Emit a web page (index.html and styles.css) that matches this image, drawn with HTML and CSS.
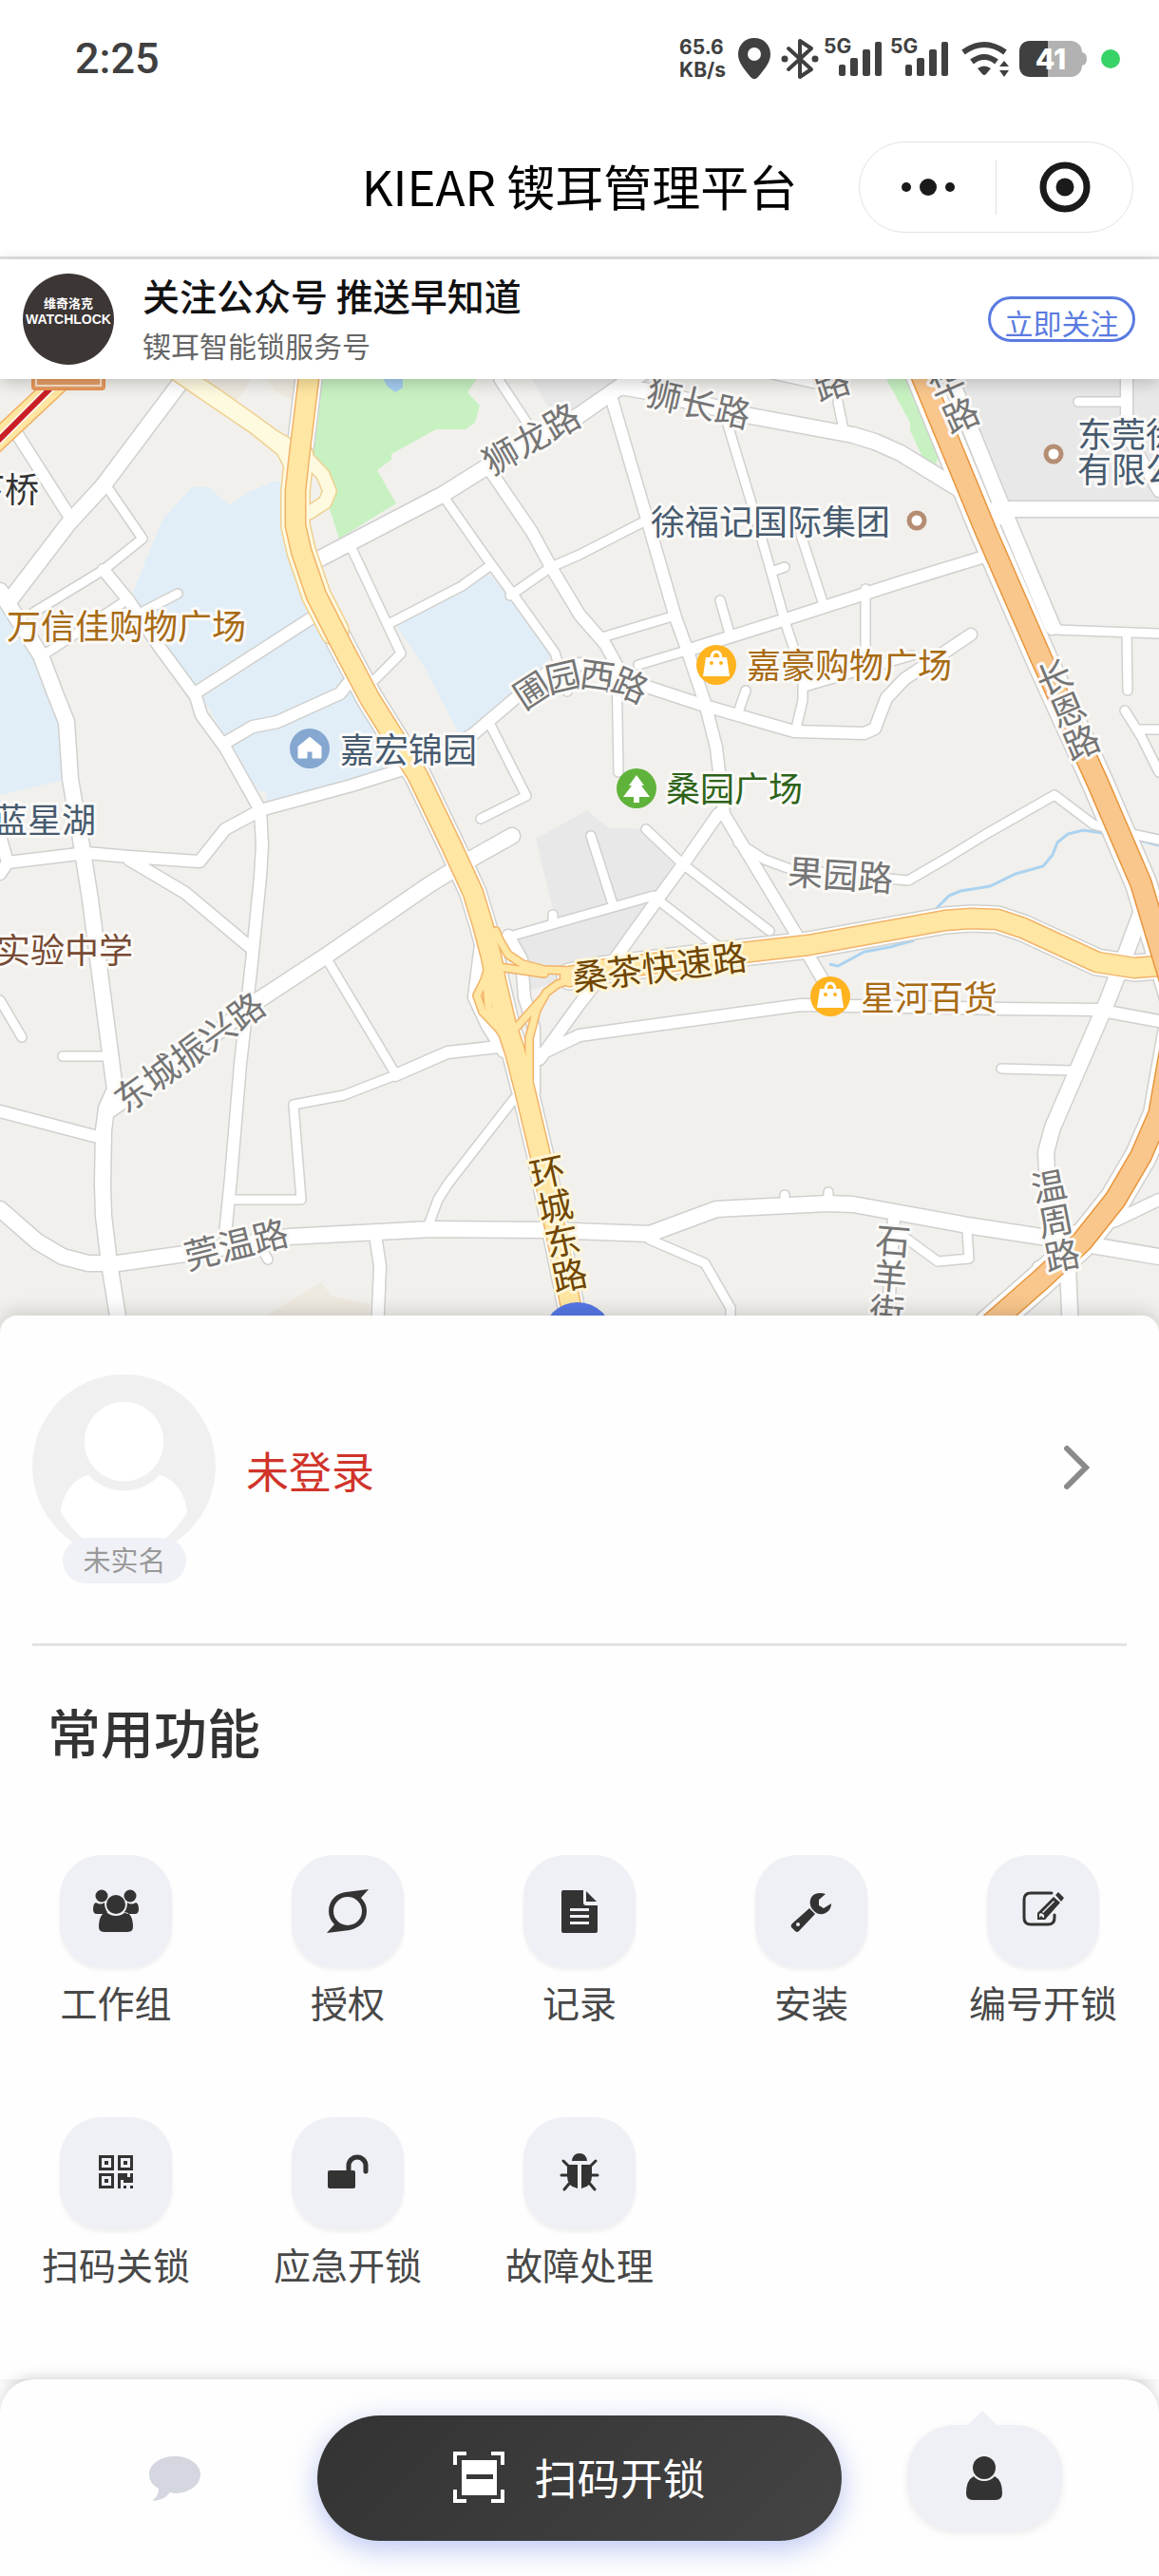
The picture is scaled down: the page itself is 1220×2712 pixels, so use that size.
FILE: index.html
```html
<!DOCTYPE html>
<html lang="zh-CN">
<head>
<meta charset="utf-8">
<meta name="viewport" content="width=device-width">
<title>KIEAR 锲耳管理平台</title>
<link rel="stylesheet" href="styles.css">
</head>
<body>
<div class="status">
  <time class="status-time">2:25</time>
  <div class="status-icons">
    <div class="rate"><span>65.6</span><span>KB/s</span></div>
    <svg width="50" height="48" viewBox="767 38 50 48"><path fill-rule="evenodd" d="M794 40c-10 0-17 7.500-17 17 0 8 5 14.500 13.500 24.500q3.500 3.500 7 0C806 71.500 811 65 811 57c0-9.500-7-17-17-17zm0 10a7 7 0 1 1 0 14 7 7 0 0 1 0-14z"/></svg>
    <svg width="48" height="48" viewBox="817 38 48 48"><path class="line4" d="M830 51l24 22-12 8V43l12 8-24 22"/><circle cx="826" cy="62" r="3.500"/><circle cx="858" cy="62" r="3.500"/></svg>
    <svg width="70" height="48" viewBox="865 38 70 48"><text x="867" y="56" class="net">5G</text><rect x="883" y="68" width="7" height="12" rx="2"/><rect x="895" y="61" width="8" height="19" rx="2"/><rect x="908" y="52" width="8" height="28" rx="2"/><rect x="921" y="44" width="7" height="36" rx="2"/></svg>
    <svg width="70" height="48" viewBox="865 38 70 48"><text x="867" y="56" class="net">5G</text><rect x="883" y="68" width="7" height="12" rx="2"/><rect x="895" y="61" width="8" height="19" rx="2"/><rect x="908" y="52" width="8" height="28" rx="2"/><rect x="921" y="44" width="7" height="36" rx="2"/></svg>
    <svg width="63" height="48" viewBox="1005 38 63 48"><path class="line6" d="M1014 55q22-16 44 0M1023 65q13-10 26 0"/><path d="M1029 72q7-5 14 0l-5 6q-2 2-4 0zM1052 70l5-6 5 6zm0 4h10l-5 7z"/></svg>
    <svg width="82" height="48" viewBox="1068 38 82 48"><rect x="1073" y="43" width="66" height="38" rx="12" fill="#b2b2b2"/><path fill="#b2b2b2" d="M1138 55q6 0 6 7t-6 7z"/><path d="M1103 43h-18q-12 0-12 12v14q0 12 12 12h18z"/><text x="1106" y="73" class="level">41</text></svg>
    <svg width="29" height="48" viewBox="1150 38 29 48"><circle cx="1169" cy="62" r="10" fill="#37d367"/></svg>
  </div>
</div>

<header class="nav">
  <h1>KIEAR 锲耳管理平台</h1>
  <div class="capsule">
    <button type="button" aria-label="更多"><svg width="56" height="20" viewBox="0 0 56 20"><circle cx="5" cy="10" r="5"/><circle cx="28" cy="10" r="9"/><circle cx="51" cy="10" r="5"/></svg></button>
    <button type="button" aria-label="关闭"><svg width="54" height="54" viewBox="0 0 54 54"><circle cx="27" cy="27" r="23" fill="none" stroke="#1a1a1a" stroke-width="7"/><circle cx="27" cy="27" r="9.500"/></svg></button>
  </div>
</header>

<section class="banner">
  <div class="brand"><span>维奇洛克</span><b>WATCHLOCK</b></div>
  <div class="banner-text">
    <h2>关注公众号 推送早知道</h2>
    <p>锲耳智能锁服务号</p>
  </div>
  <button type="button" class="follow">立即关注</button>
</section>

<div class="map">
<svg viewBox="0 399 1220 1006" preserveAspectRatio="xMidYMin slice">
  <defs>
    <g id="narrow">
      <path d="M113 513L150 567L109 600L35 645M136 630L45 690M187 625L152 643M282 1326L274 1312M66 1112H113M0 1053L23 1092M451 1290L461 1263L471 1247L541 1157M245 1263H317L309 1163L362 1153L416 1132M346 1013L416 1130"/>
      <path d="M533 987L610 965L688 943M582 970V963M622 880L645 952M680 873L719 910L810 980M692 947L754 995M882 423L888 453M859 404L804 392M766 447L789 523L812 603L828 660L845 710V737L838 767M826 597L812 602M843 563L867 637M672 700L729 683M758 632L768 667M911 620V683M637 670L711 648M537 627L580 597L610 584L680 548"/>
      <path d="M409 657L486 617L514 597M465 520L514 590L541 627L584 687L597 728M560 453L525 400M370 577L422 688L395 715M516 763L554 838L506 862M785 727L777 750M847 723L960 690M1112 663L1220 667M1186 667L1187 727M1184 748L1201 775L1220 813M1201 768H1220M1135 423H1186M1054 1125L1127 1127M946 1298L987 1328L1020 1325L1018 1297M826 1258V1270M872 1255V1270M649 700L651 813"/>
      <path d="M684 1305L742 1330L769 1377V1405M777 887L805 905L832 915L956 927L999 902L1038 878L1110 837L1151 868L1178 875L1220 884M1092 1333L1110 1325"/>
    </g>
    <g id="medium">
      <path d="M18 457L74 545M109 600L136 633L167 680L206 733L212 753L237 787L274 853L276 890L274 923L265 1013L253 1120L243 1240L237 1300M329 650L208 728M366 720L358 730L292 760L266 765L237 782M274 853L370 827L424 810L447 802L498 773L545 733L576 708L610 699L649 703L672 720L742 743L836 770L910 772L921 767L933 735L952 715L1022 668"/>
      <path d="M274 853L237 873L210 907L136 902L91 898L8 908L0 920M0 880L8 908M136 905L195 940L263 997M0 1170L103 1197M416 1132L471 1108L525 1102M568 1110L610 1090L843 1058L1057 1062L1155 1063L1220 1075M756 857L719 910L692 947L649 1007L610 1057L568 1115"/>
      <path d="M643 417L680 543L711 650L723 683L742 740L754 787L762 857L836 980L874 1045M517 497L560 560L580 597L610 647L637 678L649 700M729 683L824 653L948 613L1046 583M1186 399V457L1220 517M1220 1263L1174 1285L1100 1305M941 1283L937 1340L935 1405M395 1300L400 1333L397 1405M535 985L549 1010L552 1050L562 1082L562 1150M508 980L504 1010L499 1050L513 1080L530 1107"/>
    </g>
    <g id="wide">
      <path d="M192 400L108 512L73 550L8 635L43 690L58 730L70 760L74 820L86 890L95 947L121 1147L112 1167L109 1190L108 1247L109 1280L115 1330L127 1405M0 622L8 635M539 880L498 903L451 932L342 1007L272 1053L195 1113L113 1170"/>
      <path d="M0 1273L39 1307L66 1323L93 1330H124L195 1320L304 1302L455 1294L576 1295L684 1299L727 1283L754 1273L871 1267L898 1268L1018 1290L1096 1302L1220 1323M333 590L467 520L510 493L610 437L653 407L680 390M653 407L688 413L785 437L898 458L921 465L948 477L1018 520L1050 545M1050 536H1220M1209 940L1184 1007L1166 1053L1108 1187L1101 1213L1102 1233L1116 1290L1124 1333L1127 1405M1005 410L1022 453L1052 527L1108 660"/>
    </g>
    <path id="orange" d="M968 390L1038 560L1096 693L1155 823L1201 930L1240 1060L1220 1173L1201 1217L1174 1263L1139 1307L1096 1347L1030 1405"/>
    <path id="yellow" d="M326 390L315 480L311 517V553L317 580L333 627L360 680L389 735L440 817L475 890L498 940L508 973L517 1007L522 1033L533 1080L542 1107L553 1150L568 1213L606 1400M600 1028L633 1021L781 1003L851 995L995 969L1022 967L1050 968L1077 977L1155 1013L1194 1019L1220 1017"/>
    <path id="ramps" d="M522 980L526 990L535 1005L550 1015L573 1021L605 1022M525 1018L573 1025M605 1030L587 1036L575 1045L565 1063L557 1093V1145M572 1050L545 1080L535 1090M513 1022L510 1032L502 1048L508 1065L525 1083L540 1105M512 1033L514 1060L522 1078"/>
    <g id="pale">
      <path d="M322 481L340 500L347 517L342 529L325 540"/>
      <path d="M180 385L230 418L268 445L290 461L306 470M180 390L268 450L298 474L306 490"/>
    </g>
    <path id="verge" d="M315 480L311 517V553L317 580L333 627L352 664"/>
    <path id="pu" d="M536 743Q602 678 690 733"/>
    <g id="bag"><circle r="21" fill="#ffb31f"/><path d="M-11-8H11L14 12H-14Z" fill="#fff"/><path d="M-5-8Q-4-14 0-14T5-8" fill="none" stroke="#fff" stroke-width="3"/><circle cx="-5" cy="-2" r="2" fill="#ffb31f"/><circle cx="5" cy="-2" r="2" fill="#ffb31f"/></g>
  </defs>
  <rect y="399" width="1220" height="1006" fill="#f1f0ec"/>
  <path fill="#efeae0" d="M200 399H265L249 422ZM280 399H330V430L315 425L290 412ZM270 1391L338 1350L350 1365L389 1373V1391Z"/>
  <path fill="#e8e8e8" d="M560 399L576 427L600 440L653 405V399ZM1007 399H1220V527H1057ZM564 883L618 853L641 872H672L712 905L692 943L657 998L610 1027L556 1043L541 988L584 965Z"/>
  <path fill="#e1eef7" d="M202 513L171 547L140 623L167 677L210 730L272 833H280L282 847L418 807L389 750L327 653L303 590L296 507H288L262 518L241 532L220 513ZM514 603L584 687L545 733L498 773L482 770L447 703L416 657ZM0 637L39 700L66 763L72 820L0 837Z"/>
  <path fill="#c8f1c2" d="M330 399H502L492 413L505 427L500 445L490 452H459L412 478V484L397 495L417 530L357 567L346 533L329 473ZM933 399H965L1007 483H987L985 489L974 488L958 453V445Z"/>
  <path fill="#a5cdf0" d="M403 398L408 407L416 413L424 408V398Z"/>
  <path class="stream" d="M873 1015L882 1017L910 1002L937 997L962 990M984 958L999 943L1011 938L1042 933L1069 920L1098 912L1108 900L1113 887L1124 878L1140 874L1182 880L1220 890"/>

  <use href="#narrow" class="road n-case"/><use href="#medium" class="road m-case"/><use href="#wide" class="road w-case"/>
  <use href="#yellow" class="road y-under-case"/><use href="#orange" class="road o-under-case"/>
  <use href="#narrow" class="road n-fill"/><use href="#medium" class="road m-fill"/><use href="#wide" class="road w-fill"/>
  <use href="#yellow" class="road y-under"/><use href="#orange" class="road o-under"/>
  <use href="#pale" class="road p-case"/><use href="#verge" class="road v-case"/><use href="#pale" class="road p-fill"/><use href="#verge" class="road v-fill"/>
  <use href="#yellow" class="road y-case"/><use href="#ramps" class="road r-case"/>
  <use href="#yellow" class="road y-fill"/><use href="#ramps" class="road r-fill"/>
  <use href="#orange" class="road o-case"/><use href="#orange" class="road o-fill"/>
  <path class="road y-case" d="M70 395L-10 470"/><path class="road y-fill" d="M70 395L-10 470"/>
  <path d="M62 400L-4 466" fill="none" stroke="#fff" stroke-width="9"/><path d="M62 400L-4 466" fill="none" stroke="#c92026" stroke-width="6"/>
  <rect x="34" y="380" width="76" height="30" rx="3" fill="#e9a066" stroke="#eb9455" stroke-width="2"/><path d="M38 399V406H106V399" fill="none" stroke="#fbe3cd" stroke-width="2"/>
  <circle cx="608" cy="1408" r="37" fill="#5678e6"/>

  <g class="label gray">
    <text transform="translate(558 460) rotate(-30)">狮龙路</text>
    <text transform="translate(736 423) rotate(13)">狮长路</text>
    <text transform="translate(875 402) rotate(-18)">路</text>
    <text class="vertical" transform="translate(1004 420) rotate(-24)">华路</text>
    <text class="vertical" transform="translate(1124 747) rotate(-23)">长恩路</text>
    <text><textPath href="#pu" startOffset="50%">圃园西路</textPath></text>
    <text transform="translate(885 919) rotate(4)">果园路</text>
    <text transform="translate(198 1106) rotate(-36)">东城振兴路</text>
    <text transform="translate(248 1308) rotate(-14)">莞温路</text>
    <text class="vertical" transform="translate(1111 1285) rotate(-11)">温周路</text>
    <text class="vertical" transform="translate(937 1343) rotate(5)">石羊街</text>
  </g>
  <g class="label brown">
    <text transform="translate(694 1016) rotate(-7)">桑茶快速路</text>
    <text class="vertical" transform="translate(588 1288) rotate(-12)">环城东路</text>
  </g>
  <g class="label place">
    <text x="-31" y="513" fill="#333">下桥</text>
    <text x="7" y="657" fill="#a86b14">万信佳购物广场</text>
    <text x="-7" y="861" fill="#475b6f">蓝星湖</text>
    <text x="-4" y="998" fill="#774a34">实验中学</text>
    <text x="358" y="787" fill="#475b6f">嘉宏锦园</text>
    <text x="685" y="547" fill="#475b6f">徐福记国际集团</text>
    <text x="1134" y="455" fill="#475b6f">东莞徐</text>
    <text x="1134" y="492" fill="#475b6f">有限公</text>
    <text x="786" y="698" fill="#a86b14">嘉豪购物广场</text>
    <text x="701" y="828" fill="#2d6318">桑园广场</text>
    <text x="906" y="1048" fill="#a86b14">星河百货</text>
  </g>
  <g fill="#fff" stroke="#b58d73" stroke-width="5"><circle cx="965" cy="548" r="8"/><circle cx="1109" cy="478" r="8"/></g>
  <circle cx="326" cy="788" r="21" fill="#85a7d0"/><path d="M326 776L338 786V798H329V791H323V798H314V786Z" fill="#fff" stroke="#fff" stroke-linejoin="round"/>
  <circle cx="670" cy="830" r="21" fill="#60b33a"/><path d="M670 816L678 827H675L684 839H673V845H667V839H656L665 827H662Z" fill="#fff"/>
  <use href="#bag" x="754" y="700"/><use href="#bag" x="874" y="1049"/>
</svg>
</div>

<main class="sheet">
  <a class="profile" href="#login">
    <span class="avatar">
      <svg viewBox="0 0 195 195"><circle cx="97" cy="97" r="97" fill="#f0f0f0"/><circle cx="97" cy="71" r="42" fill="#fff"/><path fill="#fff" d="M59 106C42 112 32 127 30 146q26 43 67 43t67-43C162 127 152 112 135 106q-16 17-38 17t-38-17z"/></svg>
      <span class="badge">未实名</span>
    </span>
    <span class="name">未登录</span>
    <svg class="chevron" width="32" height="48" viewBox="0 0 32 48"><path d="M5 4L25 24L5 44"/></svg>
  </a>
  <h2 class="section-title">常用功能</h2>
  <nav class="grid">
    <a href="#group"><span class="tile"><svg viewBox="0 0 48 48"><circle cx="9" cy="8" r="6.500"/><circle cx="39" cy="8" r="6.500"/><circle cx="24" cy="17" r="10"/><path d="M3 15Q8 18 12 15Q12 21 15 25Q13 27 11 27H4Q0 27 0 22Q0 16 3 15zM45 15Q40 18 36 15Q36 21 33 25Q35 27 37 27H44Q48 27 48 22Q48 16 45 15zM14 25Q18 29 24 29T34 25Q42 27 42 41Q42 46 36 46H12Q6 46 6 41Q6 27 14 25z"/></svg></span>工作组</a>
    <a href="#auth"><span class="tile"><svg viewBox="0 0 48 48"><path fill-rule="evenodd" d="M46 1L38 10Q44 16 44 24C44 35 36 42 26 44L2 47L10 38Q4 32 4 24C4 13 12 5 22 4zM24 9a15 15 0 1 0 0 30 15 15 0 0 0 0-30z"/></svg></span>授权</a>
    <a href="#log"><span class="tile"><svg viewBox="0 0 48 48"><path fill-rule="evenodd" d="M7 2H28V15Q28 18 31 18H43V45Q43 47 41 47H7Q5 47 5 45V4Q5 2 7 2zM14 21V24H34V21zM14 28V31H34V28zM14 35V38H34V35z"/><path d="M31 3L42 14H31z"/></svg></span>记录</a>
    <a href="#install"><span class="tile"><svg viewBox="0 0 48 48"><path d="M39 6L32 12V18L37 21L45 16Q45 23 39 26T28 25Q21 19 23 12T33 5Q37 5 39 6z"/><path fill-rule="evenodd" d="M22 21L28 27L11 45Q9 47 7 45L3 41Q2 39 4 37zM10 36a2 2 0 1 0 0 4 2 2 0 0 0 0-4z"/></svg></span>安装</a>
    <a href="#number"><span class="tile"><svg viewBox="0 0 48 48"><path class="pen-frame" d="M33 5H11Q4 5 4 12V31Q4 38 11 38H29Q36 38 36 31V28"/><path fill-rule="evenodd" d="M35 9L42 15L26 33H18V26zM35 13L23 25L24 26L36 14zM20 27V31L22 29L24 31H25V28L22 26zM37 7L40 4L46 10L43 14z"/></svg></span>编号开锁</a>
    <a href="#scan-lock"><span class="tile"><svg viewBox="0 0 48 48"><path fill-rule="evenodd" d="M6 5H22V21H6zM9 8V18H19V8zM26 5H42V21H26zM29 8V18H39V8zM6 24H22V40H6zM9 27V37H19V27zM12 11h4v4h-4zM32 11h4v4h-4zM12 30h4v4h-4zM26 24H36V28H39V24H42V34H32V31H29V40H26zM32 37h3v3h-3zM39 37h3v3h-3z"/></svg></span>扫码关锁</a>
    <a href="#emergency"><span class="tile"><svg viewBox="0 0 48 48"><rect x="3" y="21" width="29" height="19" rx="2"/><path class="shackle" d="M25 22V16a9 9 0 0 1 18 0V22"/></svg></span>应急开锁</a>
    <a href="#fault"><span class="tile"><svg viewBox="0 0 48 48"><path d="M16 11Q17 3 24 3T32 11zM11 15H22V40Q11 38 11 27zM37 15H26V40Q37 38 37 27z"/><path class="legs" d="M12 16L7 11M36 16L41 11M12 26H5M36 26H43M13 35L8 41M35 35L40 41"/></svg></span>故障处理</a>
  </nav>
</main>

<footer class="tabbar">
  <button type="button" class="tab" aria-label="消息"><svg width="54" height="50" viewBox="0 0 54 50"><path fill="#d4d7df" d="M27 2C42 2 54 10 54 21S42 41 27 41L22 40Q16 48 5 49Q3 49 5 47Q10 43 10 36Q0 31 0 21C0 10 12 2 27 2z"/></svg></button>
  <button type="button" class="scan"><svg width="54" height="54" viewBox="0 0 54 54"><path class="corners" d="M2 14V2H14M40 2H52V14M52 40V52H40M14 52H2V40"/><path fill="#fff" fill-rule="evenodd" d="M9 9H46V46H9zM14 24V29H42V24z"/></svg>扫码开锁</button>
  <button type="button" class="tab active" aria-label="我的"><svg width="40" height="48" viewBox="0 0 40 48"><circle cx="20" cy="13" r="12"/><path d="M9 22Q13 27 20 27T31 22Q39 26 39 40Q39 47 32 47H8Q1 47 1 40Q1 26 9 22z"/></svg></button>
</footer>
</body>
</html>
```
FILE: styles.css
```css
* { box-sizing: border-box; }
body {
  margin: 0;
  min-height: 100vh;
  display: flex;
  flex-direction: column;
  background: #fefefe;
  color: #333;
  font-family: "Noto Sans CJK SC", sans-serif;
}
h1, h2, p { margin: 0; }
a { color: inherit; text-decoration: none; }
button { border: 0; padding: 0; background: none; font: inherit; color: inherit; }
svg { display: block; flex: none; }

.status {
  height: 124px;
  padding: 0 41px 0 79px;
  display: flex;
  align-items: center;
  justify-content: space-between;
  background: #fff;
  color: #404040;
}
.status-time { font: 500 45px/48px Roboto, sans-serif; }
.status-icons { display: flex; align-items: center; fill: #404040; }
.status-icons svg { overflow: visible; }
.rate { display: flex; flex-direction: column; padding-right: 3px; font: 700 21px/24px Inter, sans-serif; }
.net { font: 700 21px Inter, sans-serif; }
.level { font: 800 30px Inter, sans-serif; fill: #fff; text-anchor: middle; }
.line4, .line6 { fill: none; stroke: #404040; stroke-width: 4; stroke-linejoin: round; stroke-linecap: round; }
.line6 { stroke-width: 6; stroke-linecap: butt; }

.nav {
  position: relative;
  height: 149px;
  display: flex;
  align-items: center;
  justify-content: center;
  border-bottom: 3px solid #e3e3e3;
  background: #fff;
}
.nav h1 { padding-bottom: 5px; font-size: 51px; line-height: 60px; font-weight: 400; color: #000; }
.capsule {
  position: absolute;
  top: 25px;
  right: 27px;
  width: 289px;
  height: 96px;
  display: flex;
  align-items: center;
  border: 1px solid #e3e3e3;
  border-radius: 48px;
  fill: #1a1a1a;
}
.capsule button { flex: 1; height: 58px; display: flex; align-items: center; justify-content: center; }
.capsule button + button { border-left: 1px solid #e0e0e0; }

.banner {
  position: relative;
  z-index: 1;
  height: 126px;
  padding: 0 25px 0 24px;
  display: flex;
  align-items: center;
  background: #fff;
  box-shadow: 0 4px 16px rgba(0, 0, 0, .2);
}
.brand {
  width: 96px;
  height: 96px;
  border-radius: 50%;
  background: #3c3635;
  color: #fff;
  display: flex;
  flex-direction: column;
  align-items: center;
  padding-top: 22px;
  font-size: 13px;
  line-height: 18px;
  font-weight: 700;
}
.brand b { font: 700 14px/16px "Liberation Sans", sans-serif; }
.banner-text { flex: 1; margin-left: 30px; }
.banner h2 { font-size: 39px; line-height: 54px; font-weight: 500; color: #111; }
.banner p { font-size: 30px; line-height: 52px; color: #666; }
.follow {
  width: 155px;
  height: 48px;
  border: 3px solid #5a7be0;
  border-radius: 24px;
  color: #5a7be0;
  font-size: 30px;
  line-height: 48px;
}

.map { height: 1006px; overflow: hidden; background: #f1f0ec; }
.map > svg { width: 100%; height: 100%; }
.road { fill: none; stroke-linejoin: round; stroke-linecap: round; stroke: #fff; }
.n-case, .m-case, .w-case, .y-under-case, .o-under-case { stroke: #d0d0cf; }
.n-case { stroke-width: 12px; }
.n-fill { stroke-width: 9px; }
.m-case { stroke-width: 15px; }
.m-fill { stroke-width: 12px; }
.w-case { stroke-width: 19px; }
.w-fill { stroke-width: 16px; }
.y-under-case { stroke-width: 30px; }
.y-under { stroke-width: 27px; }
.o-under-case { stroke-width: 35px; }
.o-under { stroke-width: 32px; }
.p-case, .v-case { stroke: #efd090; }
.p-fill, .v-fill { stroke: #fefae0; }
.p-case { stroke-width: 16px; }
.p-fill { stroke-width: 13px; }
.v-case { stroke-width: 32px; }
.v-fill { stroke-width: 29px; }
.y-case { stroke: #f2b368; stroke-width: 23px; }
.y-fill { stroke: #ffe6a2; stroke-width: 20px; }
.r-case { stroke: #f2b368; stroke-width: 10px; }
.r-fill { stroke: #ffe6a2; stroke-width: 7px; }
.o-case { stroke: #e8953c; stroke-width: 24px; }
.o-fill { stroke: #f9c78c; stroke-width: 21px; }
.stream { fill: none; stroke: #abd3f0; stroke-width: 3px; }
.label {
  font-size: 37px;
  font-weight: 400;
  text-anchor: middle;
  dominant-baseline: central;
  stroke: #fbfaf8;
  stroke-width: 6px;
  stroke-linejoin: round;
  paint-order: stroke;
}
.gray { fill: #757575; }
.brown { fill: #704600; stroke: #fff6d8; }
.place { font-size: 36px; text-anchor: start; }
.vertical { writing-mode: vertical-rl; }

.sheet {
  position: relative;
  flex: 1;
  margin-top: -20px;
  padding-bottom: 100px;
  border-radius: 18px 18px 0 0;
  background: #fefefe;
  box-shadow: 0 -4px 20px rgba(0, 0, 0, .15);
}
.profile {
  margin: 0 34px;
  padding: 62px 36px 88px 0;
  display: flex;
  align-items: center;
  border-bottom: 3px solid #e3e3e3;
}
.avatar { position: relative; width: 194px; height: 195px; }
.badge {
  position: absolute;
  left: 32px;
  bottom: -25px;
  width: 130px;
  height: 48px;
  border-radius: 24px;
  background: #f0f1f6;
  color: #999;
  font-size: 29px;
  line-height: 44px;
  text-align: center;
}
.name { flex: 1; margin-left: 31px; padding-top: 6px; font-size: 45px; line-height: 60px; color: #d0342a; }
.chevron path { fill: none; stroke: #8a8a8a; stroke-width: 6px; stroke-linecap: round; }
.section-title { margin: 59px 0 101px 50px; font-size: 56px; line-height: 60px; font-weight: 500; }
.grid { display: grid; grid-template-columns: repeat(5, 1fr); row-gap: 102px; }
.grid a {
  display: flex;
  flex-direction: column;
  align-items: center;
  gap: 16px;
  font-size: 39px;
  line-height: 40px;
  color: #484848;
  white-space: nowrap;
}
.tile {
  width: 118px;
  height: 118px;
  border-radius: 44px;
  display: flex;
  align-items: center;
  justify-content: center;
  background: #eff0f5;
  box-shadow: 0 3px 4px rgba(0, 0, 0, .06);
}
.tile svg { width: 48px; height: 48px; fill: #333; }
.tile .pen-frame, .tile .shackle, .tile .legs { fill: none; stroke: #333; stroke-width: 3px; stroke-linecap: round; }
.tile .shackle { stroke-width: 5px; }

.tabbar {
  position: relative;
  height: 207px;
  padding: 0 34px;
  display: grid;
  grid-template-columns: 1fr 552px 1fr;
  justify-items: center;
  align-items: center;
  border-radius: 36px 36px 0 0;
  background: #fefefe;
  box-shadow: 0 -2px 14px rgba(0, 0, 0, .16);
}
.scan {
  width: 552px;
  height: 132px;
  padding-bottom: 2px;
  border-radius: 66px;
  display: flex;
  align-items: center;
  justify-content: center;
  gap: 31px;
  background: linear-gradient(135deg, #333, #444);
  color: #fff;
  font-size: 45px;
  box-shadow: 0 8px 30px rgba(86, 112, 224, .4);
}
.corners { fill: none; stroke: #fff; stroke-width: 4px; }
.tab {
  position: relative;
  width: 163px;
  height: 111px;
  border-radius: 50px;
  display: flex;
  align-items: center;
  justify-content: center;
  fill: #333;
}
.active { background: #eff0f5; box-shadow: 0 3px 8px rgba(0, 0, 0, .08); }
.active::before {
  content: "";
  position: absolute;
  top: -15px;
  left: 64px;
  border: 15px solid transparent;
  border-top: 0;
  border-bottom-color: #eff0f5;
}
```
